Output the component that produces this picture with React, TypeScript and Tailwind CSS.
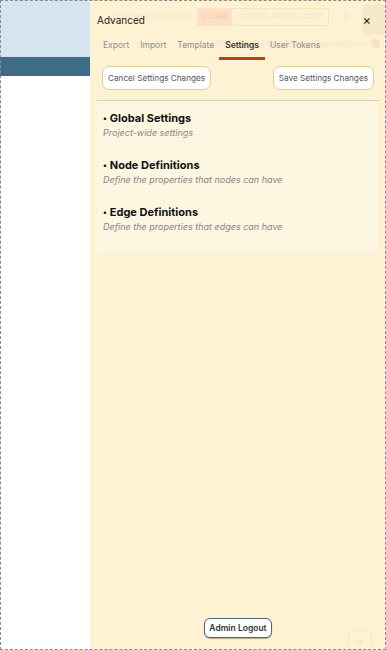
import React from "react";

export default function App() {
  const sections = [
    { t: "Global Settings", d: "Project-wide settings" },
    { t: "Node Definitions", d: "Define the properties that nodes can have" },
    { t: "Edge Definitions", d: "Define the properties that edges can have" },
  ];
  return (
    <div className="relative w-[386px] h-[650px] overflow-hidden bg-white" style={{ fontFamily: "Inter, 'Noto Sans', sans-serif" }}>
      {/* background app */}
      <div className="flex flex-col">
        <div className="h-[57px] bg-[#d5e4ee]" />
        <div className="h-[19px] bg-[#3f6b86]" />
      </div>
      {/* dashed frame */}
      <div className="absolute inset-0 border border-dashed border-[#8a8a8a] pointer-events-none z-20" />
      {/* panel */}
      <div className="absolute top-0 right-0 bottom-0 w-[296px] bg-[#fff2d3] flex flex-col z-10">
        {/* faint background content */}
        <div className="absolute left-[23px] top-[8px] flex items-center whitespace-nowrap text-[7.5px] text-[#f4e5c3]">
          <span className="mr-[7px]">Enter your login token</span>
          <span className="rounded-l-[3px] bg-[#fce0c6] px-[5px] py-[3px] text-[#f8ceb0] font-semibold">LOGIN</span>
          <span className="border border-[#f4e4c0] rounded-r-[3px] px-[5px] py-[2px]">CLASSID-PROUD-CODE</span>
          <span className="ml-[14px] text-[12px]">?</span>
        </div>
        <div className="absolute right-0 top-[4px] w-[24px] h-[31px] rounded-l-[6px] bg-[#f7eaca]" />
        <div className="absolute left-[125px] top-[37px] flex items-center gap-[4px] whitespace-nowrap text-[9px] text-[#f5e7c6]">
          <span>NETGRAPH for History Connections</span>
          <span className="w-[9px] h-[9px] rounded-full bg-[#f3e3c0]" />
        </div>

        <div className="relative flex items-center justify-between pl-[7px] pr-[15px] pt-[11px] h-[29px]">
          <span className="text-[10px] text-[#222]">Advanced</span>
          <span className="text-[13px] leading-none text-[#222]">×</span>
        </div>
        <div className="relative flex pl-[13px] gap-[11px] text-[8.5px] text-[#8f8f8f] mt-[10px]">
          <span className="pb-[8px]">Export</span>
          <span className="pb-[8px]">Import</span>
          <span className="pb-[8px]">Template</span>
          <span className="pb-[5px] font-semibold text-[#333] border-b-[3px] border-[#b8411c] px-[6px] -mx-[6px]">Settings</span>
          <span className="pb-[8px]">User Tokens</span>
        </div>
        <div className="relative mx-[7px] flex justify-between px-[5px] pt-[6px] pb-[10px] border-b border-[#cfcfc4]">
          <button className="h-[24px] px-[5px] rounded-[7px] border border-[#d9cf9c] bg-white text-[8.2px] text-[#555]">Cancel Settings Changes</button>
          <button className="h-[24px] px-[5px] rounded-[7px] border border-[#d9cf9c] bg-white text-[8.2px] text-[#555]">Save Settings Changes</button>
        </div>
        <div className="relative mx-[7px] bg-[#fdf6e1] px-[6px] pt-[9px] pb-[20px] flex flex-col gap-[18px]">
          {sections.map((s) => (
            <div key={s.t} className="flex flex-col">
              <div className="flex items-center text-[11px] font-bold text-[#111] leading-[16px]">
                <span className="text-[8px] mr-[3px]">•</span>
                {s.t}
              </div>
              <div className="text-[9px] italic text-[#888] leading-[13px]">{s.d}</div>
            </div>
          ))}
        </div>
        <div className="flex-1" />
        <div className="relative flex justify-center pb-[12px]">
          <button className="h-[20px] px-[4px] rounded-[6px] border border-[#4e6777] bg-white text-[8.5px] font-semibold text-[#333] shadow-[0_1px_1px_rgba(0,0,0,0.3)]">Admin Logout</button>
        </div>
        <div className="absolute right-[14px] bottom-0 w-[24px] h-[20px] rounded-t-[6px] border border-[#f6e8c8] flex items-center justify-center text-[#ece0bf] text-[10px]">+</div>
      </div>
    </div>
  );
}
